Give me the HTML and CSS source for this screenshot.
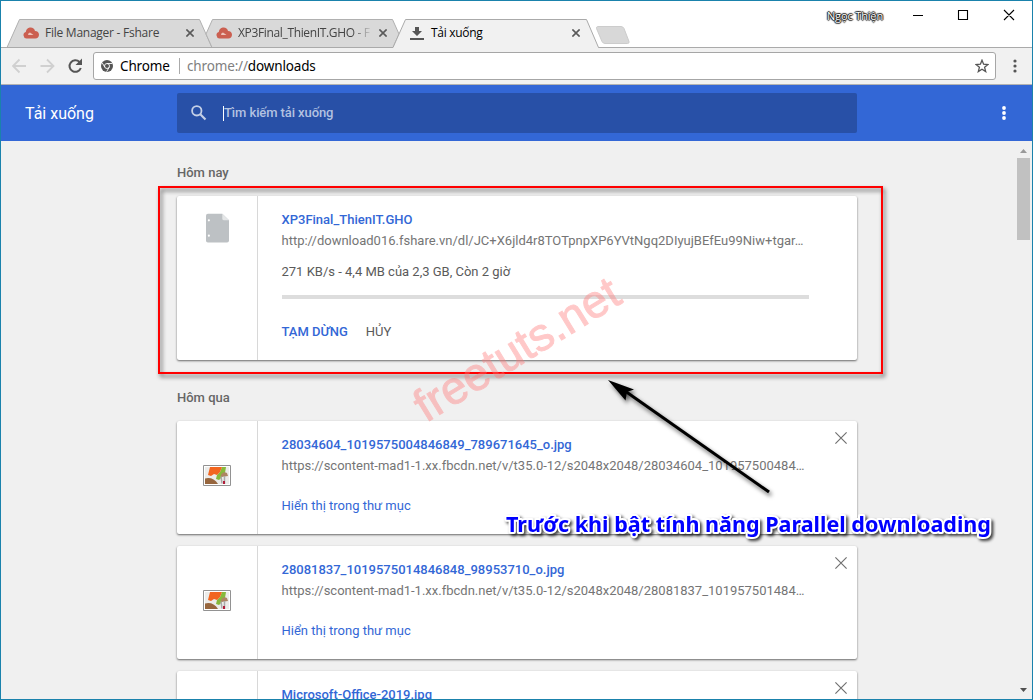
FILE: index.html
```html
<!DOCTYPE html>
<html lang="vi">
<head>
<meta charset="utf-8">
<title>Tải xuống</title>
<link rel="stylesheet" href="styles.css">
</head>
<body>
<svg width="0" height="0" class="defs">
  <defs>
    <symbol id="cloud" viewBox="0 0 16 12"><path d="M3.500 11.500a3.400 3.400 0 0 1-.7-6.600C3.500 1.500 5.500.500 7.500.500c2.500 0 4 1.500 4.500 3.500 2.500 0 4 1.600 4 3.700s-1.500 3.800-3.700 3.800z" fill="#cb5f50"/><path d="M5 8q0-2.500 2-2.500L10.500 8z" fill="#edc4bb"/></symbol>
    <symbol id="tab-x" viewBox="0 0 8 8"><path d="M.4.4l7.200 7.200M7.600.4L.4 7.600" stroke="#5a5a5a" stroke-width="1.600"/></symbol>
    <symbol id="remove" viewBox="0 0 12 12"><path d="M.4.4l11.200 11.200M11.600.4L.4 11.600" stroke="#707070" stroke-width="1.150"/></symbol>
    <symbol id="picture" viewBox="0 0 28 21">
      <path d="M.5.500h27v20H.5z" fill="#fff" stroke="#929292"/>
      <path d="M2 2h24v17H2z" fill="#ececea"/>
      <path d="M19 2h4l-1 6-3 4-3 3-3-1 1-4 3-3z" fill="#86b93b"/>
      <path d="M7 2h12l-2 5-3 3-3-1-3 2-3-1 1-4z" fill="#f2651f"/>
      <path d="M2 13.500q8-2 13 5.500H2z" fill="#97663e"/>
      <path d="M18 10q2-4 6-2l1 3-7 1z" fill="#ad8562"/>
      <path d="M18 11.500l1 7M21.500 11v8" stroke="#aaa" stroke-width="1.500"/>
      <path d="M20 16h2v3h-2z" fill="#b01c39"/>
    </symbol>
  </defs>
</svg>
<div class="window">
  <div class="titlebar">
    <svg class="tab-shapes" width="640" height="47" viewBox="0 0 640 47">
      <path d="M6 46.500 18.500 18.500H198.500L211 46.500z" fill="#d9d9d9" stroke="#b0b0b0"/>
      <path d="M392 46.500H211L205 33 211.500 18.500H391.500L398 33z" fill="#d9d9d9" stroke="#b0b0b0"/>
      <path d="M0 46.500H392L404.500 18.500H585.500L597.500 46.500H640V47H0z" fill="#f1f1f1"/>
      <path d="M0 46.500H392L404.500 18.500H585.500L597.500 46.500H640" fill="none" stroke="#aaa"/>
      <path d="M596.500 25.500H620q2 0 3 2l5 13q.5 2-1.500 2H604q-2 0-3-2l-5.500-13q0-2 1-2z" fill="#d8d8d8" stroke="#ccc"/>
    </svg>
    <div class="tabs">
      <div class="tab tab-one"><svg width="16" height="12"><use href="#cloud"/></svg><span class="tab-name name-one">File Manager - Fshare</span><svg width="8" height="8"><use href="#tab-x"/></svg></div>
      <div class="tab tab-two"><svg width="16" height="12"><use href="#cloud"/></svg><span class="tab-name name-two">XP3Final_ThienIT.GHO - F</span><svg width="8" height="8"><use href="#tab-x"/></svg></div>
      <div class="tab tab-three"><svg width="14" height="13" viewBox="0 0 14 13"><path d="M5 0h4v4h3L7 9 2 4h3zM0 11h14v2H0z" fill="#555"/></svg><span class="tab-name name-three">Tải xuống</span><svg width="8" height="8"><use href="#tab-x"/></svg></div>
    </div>
    <div class="controls">
      <span class="user">Ngọc Thiện</span>
      <svg width="102" height="12" viewBox="0 0 102 12"><path d="M0 6.500h10M45.500 1.500h9v9h-9zM91 1l10 10M101 1 91 11" fill="none" stroke="#000" stroke-width="1.100"/></svg>
    </div>
  </div>
  <div class="toolbar">
    <svg class="nav" width="72" height="16" viewBox="0 0 72 16">
      <path d="M14 8H1.500M7.500 1.500 1 8l6.500 6.500M28.500 8H41M35 1.500 41.500 8 35 14.500" fill="none" stroke="#d0d0d0" stroke-width="1.800"/>
      <path d="M67.500 4A5.800 5.800 0 1 0 68.800 10" fill="none" stroke="#555" stroke-width="2"/><path d="M70 .5V7h-6.500z" fill="#555"/>
    </svg>
    <div class="omnibox">
      <svg width="12" height="12" viewBox="0 0 12 12"><circle cx="6" cy="6" r="6" fill="#555"/><circle cx="6" cy="6" r="2.500" fill="#555" stroke="#fff" stroke-width=".9"/><path d="M6 3.500h5.300M3.800 7.200 1.200 2.800M8.200 7.200 5.600 11.700" stroke="#fff" stroke-width=".9"/></svg>
      <span class="chip">Chrome</span><span class="bar"></span><span class="address"><span class="scheme">chrome://</span>downloads</span>
      <svg class="star" width="14" height="14" viewBox="0 0 14 14"><path d="M7 1.200 8.600 5.200 13 5.500 9.600 8.300 10.700 12.600 7 10.200 3.300 12.600 4.400 8.300 1 5.500 5.400 5.200z" fill="none" stroke="#555" stroke-width="1.300"/></svg>
    </div>
    <svg width="4" height="14" viewBox="0 0 4 14" fill="#555"><circle cx="2" cy="2" r="1.600"/><circle cx="2" cy="7" r="1.600"/><circle cx="2" cy="12" r="1.600"/></svg>
  </div>
  <header class="header">
    <h1 class="heading">Tải xuống</h1>
    <div class="search">
      <svg width="16" height="16" viewBox="0 0 16 16"><circle cx="5.800" cy="5.800" r="4.700" fill="none" stroke="#c5d0e7" stroke-width="1.800"/><path d="M9.300 9.300l5.200 5.200" stroke="#c5d0e7" stroke-width="2.100"/></svg>
      <span class="caret"></span><span class="hint">Tìm kiếm tải xuống</span>
    </div>
    <svg class="more" width="4" height="14" viewBox="0 0 4 14" fill="#fff"><circle cx="2" cy="2" r="1.900"/><circle cx="2" cy="7" r="1.900"/><circle cx="2" cy="12" r="1.900"/></svg>
  </header>
  <div class="body">
    <main class="list">
      <h2 class="date">Hôm nay</h2>
      <section class="card active">
        <div class="icon"><svg width="23" height="30" viewBox="0 0 24 30"><path d="M2 0h15l7 7v21q0 2-2 2H2q-2 0-2-2V2q0-2 2-2z" fill="#bdc1c4"/><path d="M17 0v5q0 2 2 2h5z" fill="#e4e6e7"/><circle cx="3" cy="7" r="1.100" fill="#fff"/><circle cx="3" cy="23" r="1.100" fill="#fff"/></svg></div>
        <div class="info">
          <div class="file">XP3Final_ThienIT.GHO</div>
          <div class="url">http://download016.fshare.vn/dl/JC+X6jld4r8TOTpnpXP6YVtNgq2DIyujBEfEu99Niw+tgar…</div>
          <div class="status">271 KB/s - 4,4 MB của 2,3 GB, Còn 2 giờ</div>
          <div class="progress"></div>
          <div class="actions"><span class="pause">TẠM DỪNG</span><span>HỦY</span></div>
        </div>
      </section>
      <h2 class="date yesterday">Hôm qua</h2>
      <section class="card">
        <div class="icon"><svg width="28" height="21"><use href="#picture"/></svg></div>
        <div class="info">
          <div class="file">28034604_1019575004846849_789671645_o.jpg</div>
          <div class="url">https://scontent-mad1-1.xx.fbcdn.net/v/t35.0-12/s2048x2048/28034604_101957500484…</div>
          <div class="show">Hiển thị trong thư mục</div>
        </div>
        <svg class="remove" width="12" height="12"><use href="#remove"/></svg>
      </section>
      <section class="card">
        <div class="icon"><svg width="28" height="21"><use href="#picture"/></svg></div>
        <div class="info">
          <div class="file">28081837_1019575014846848_98953710_o.jpg</div>
          <div class="url">https://scontent-mad1-1.xx.fbcdn.net/v/t35.0-12/s2048x2048/28081837_101957501484…</div>
          <div class="show">Hiển thị trong thư mục</div>
        </div>
        <svg class="remove" width="12" height="12"><use href="#remove"/></svg>
      </section>
      <section class="card">
        <div class="icon"></div>
        <div class="info"><div class="file">Microsoft-Office-2019.jpg</div></div>
        <svg class="remove" width="12" height="12"><use href="#remove"/></svg>
      </section>
    </main>
    <div class="scrollbar">
      <svg width="7" height="4" viewBox="0 0 7 4"><path d="M0 4 3.500 0 7 4z" fill="#999"/></svg>
      <div class="thumb"></div>
      <svg class="down" width="7" height="4" viewBox="0 0 7 4"><path d="M0 0h7L3.500 4z" fill="#505050"/></svg>
    </div>
  </div>
</div>
<svg class="annotations" width="1033" height="700" viewBox="0 0 1033 700">
  <rect class="shade" x="159" y="187" width="723" height="186" fill="none" stroke="#f00" stroke-width="2"/>
  <text class="watermark" transform="translate(426 423) rotate(-31.500)" textLength="232">freetuts.net</text>
  <g class="shade"><path d="M625 391 769 492" stroke="#000" stroke-width="3"/><path d="M608 380 634 389.500 627 392 625.500 400.500z"/></g>
  <text class="callout" x="506" y="532" textLength="485" lengthAdjust="spacingAndGlyphs">Trước khi bật tính năng Parallel downloading</text>
</svg>
</body>
</html>
```
FILE: styles.css
```css
* { box-sizing: border-box; }
body { margin: 0; font-family: Roboto, sans-serif; }
svg { display: block; flex: none; }
.defs { position: absolute; }
.window { width: 1033px; height: 700px; border: 1px solid #1a82ac; background: #f0f0f0; display: flex; flex-direction: column; overflow: hidden; }
.titlebar { height: 47px; flex: none; background: #fff; border-bottom: 1px solid #aaa; display: flex; justify-content: space-between; position: relative; }
.tab-shapes { position: absolute; left: 0; top: 0; }
.tabs { position: relative; display: flex; padding: 18px 0 0 22px; font: 12px/28px "Open Sans", sans-serif; color: #444; }
.tab { display: flex; align-items: center; height: 28px; }
.tab-one { width: 193px; gap: 6px; }
.tab-two { width: 194px; gap: 6px; }
.tab-three { gap: 7px; }
.tab-name { white-space: nowrap; }
.name-one { width: 135px; letter-spacing: -.25px; }
.name-two { width: 135px; letter-spacing: -.35px; mask-image: linear-gradient(to right, #000 84%, transparent 100%); }
.name-three { width: 134px; color: #000; letter-spacing: -.3px; }
.controls { display: flex; align-items: flex-start; padding: 8px 17px 0 0; gap: 30px; position: relative; }
.user { font: 11px/14px "Open Sans", sans-serif; letter-spacing: -.15px; color: #fff; text-shadow: 0 0 1px #000, 1px 0 1px #222, -1px 0 1px #222, 0 1px 1px #222, 0 -1px 1px #222; }
.toolbar { height: 37px; flex: none; background: #f1f1f1; border-bottom: 1px solid #b2b2b2; display: flex; align-items: center; padding: 0 15px 0 11px; }
.nav { margin-right: 9px; }
.omnibox { width: 903px; flex: none; height: 28px; background: #fff; border: 1px solid #a6a6a6; border-radius: 3px; margin-right: 17px; padding: 0 6px 0 7px; display: flex; align-items: center; font: 13.500px/26px "Noto Sans", sans-serif; letter-spacing: -.15px; color: #000; }
.chip { margin-left: 7px; width: 50px; }
.bar { width: 1px; height: 16px; background: #aaa; margin: 0 7px 0 9px; }
.scheme { color: #808080; }
.star { margin-left: auto; }
.header { height: 56px; flex: none; background: #3367d6; display: flex; align-items: center; padding: 0 26px 0 24px; color: #fff; }
.heading { margin: 0; padding-top: 1px; width: 152px; font-size: 16px; font-weight: 400; line-height: 24px; }
.search { width: 680px; height: 40px; border-radius: 2px; background: #2850a7; display: flex; align-items: center; padding-left: 14px; }
.caret { width: 1px; height: 15px; background: #fff; margin-left: 16px; }
.hint { font-size: 13px; font-weight: 500; letter-spacing: -.1px; padding-bottom: 2px; color: #b3c2e1; }
.more { margin-left: auto; }
.body { flex: 1; min-height: 0; display: flex; justify-content: space-between; overflow: hidden; }
.list { width: 680px; margin-left: 176px; padding-top: 22px; }
.date { margin: 0 0 13px; font-size: 13px; line-height: 20px; font-weight: 500; color: #666; }
.yesterday { margin-top: 28px; }
.card { height: 113px; margin-bottom: 12px; background: #fff; border-radius: 2px; box-shadow: 0 1px 2px rgba(0,0,0,.48), 0 1px 3px rgba(0,0,0,.12); display: flex; position: relative; }
.active { height: 164px; }
.icon { width: 81px; border-right: 1px solid #d8d8d8; display: flex; align-items: center; justify-content: center; padding-bottom: 4px; }
.active .icon { align-items: flex-start; padding: 17px 0 0 1px; }
.info { width: 528px; margin-left: 23.500px; padding-top: 14px; font-size: 13px; line-height: 20px; color: #5a5a5a; white-space: nowrap; }
.file { font-weight: 500; color: #3367d6; }
.url { color: #757575; line-height: 22px; }
.status { margin-top: 10px; line-height: 20px; }
.progress { height: 4px; width: 527px; background: #ddd; margin: 13px 0 23px .5px; }
.actions { display: flex; gap: 18px; line-height: 20px; }
.pause { font-weight: 500; color: #3367d6; }
.show { margin-top: 19px; color: #3367d6; }
.remove { position: absolute; right: 10.500px; top: 10.500px; }
.scrollbar { width: 17px; display: flex; flex-direction: column; align-items: center; padding: 8px 0 7px; }
.thumb { width: 13px; height: 82px; background: #c1c1c1; margin-top: 5px; }
.down { margin-top: auto; }
.annotations { position: absolute; left: 0; top: 0; }
.shade { filter: drop-shadow(2px 3px 2px rgba(0,0,0,.6)); }
.watermark { font: 46px "Liberation Sans", sans-serif; fill: #ff7878; stroke: #ff7878; stroke-width: 1; opacity: .4; }
.callout { font: bold 21.500px "Noto Sans", sans-serif; fill: #00f; stroke: #fff; stroke-width: 4px; stroke-linejoin: round; paint-order: stroke; filter: drop-shadow(2px 2px 1.500px rgba(0,0,0,.75)); }
```
